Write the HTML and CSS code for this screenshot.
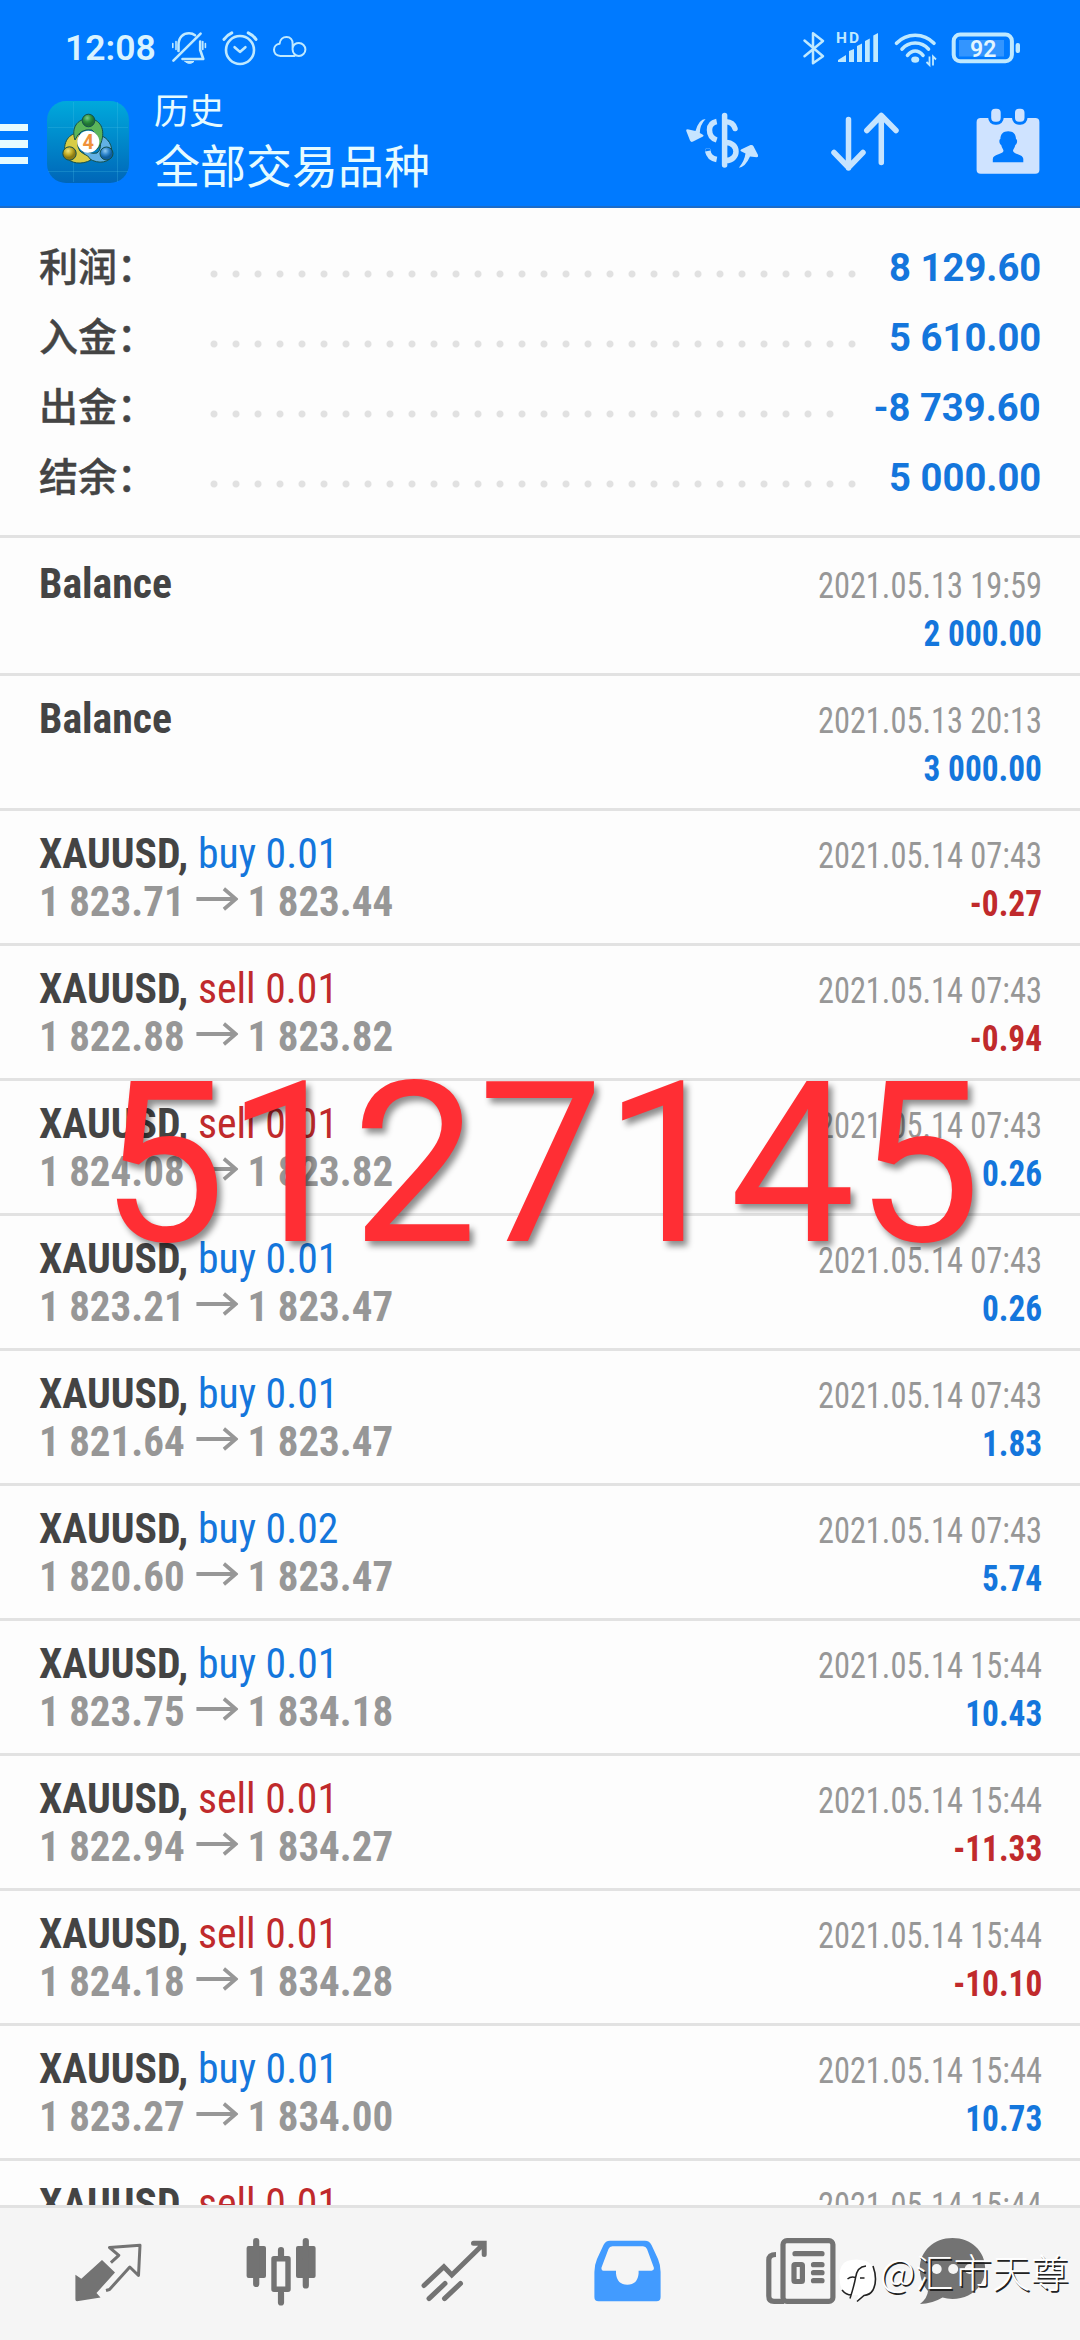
FILE: index.html
```html
<!DOCTYPE html>
<html lang="zh-CN">
<head>
<meta charset="utf-8">
<title>历史</title>
<link rel="stylesheet" href="styles.css">
</head>
<body>
<div class="screen">
  <header class="header">
    <div class="status">
      <span class="clock">12:08</span>
      <svg class="status-left" viewBox="168 28 144 40" width="144" height="40">
        <g fill="none" stroke="#bfe9ff" stroke-width="2.6" stroke-linecap="round" stroke-linejoin="round">
          <path d="M173.4 60.6L200.6 33.6M178.5 51V45C178.5 37 183.500 33.300 189 33.300C191.500 33.300 193.500 34 195 35.200M200.200 41.500V50L203.300 59H182.500"/>
          <path d="M172.800 43.500v4M176 41.500v8M202.800 41.500v8M205.400 43.500v4" stroke-width="1.600"/>
          <path d="M185 61.500h9q-4.500 4-9 0z" fill="#bfe9ff" stroke-width="1"/>
          <circle cx="240" cy="50" r="14"/>
          <path d="M224 39.400Q227 35 231.800 32.800M256 39.400Q253 35 248.200 32.800" stroke-width="3"/>
          <path d="M234.600 47.200L239.900 51.900L245.400 47.200"/>
          <path stroke-width="2" d="M294.500 55.900H280.500C276 55.900 274 53 274 49.800C274 46.500 276.500 44 279.600 43.700C280 39.500 283 37 286.500 37C290.500 37 292.600 40 292.600 43.500V49.600C292.600 53 295.200 55.900 298.900 55.900C302.500 55.900 305.400 53 305.400 49.500C305.400 46 302.500 43 298.900 43C296 43 293.500 45 292.800 47.500"/>
        </g>
      </svg>
      <svg class="status-right" viewBox="800 28 224 40" width="224" height="40">
        <path d="M804.500 40.500L823 56.300L813 63.200V33.200L823 41L804.500 56.300" fill="none" stroke="#bfe9ff" stroke-width="2.500" stroke-linejoin="round" stroke-linecap="round"/>
        <text class="hd" x="836" y="43" textLength="23">HD</text>
        <path fill="#bfe9ff" d="M838 62v-2l8-5v7zM849 62v-11l5-2v13zM857 62V46l5-2.500V62zM865 62V41l4.800-2.500V62zM873.300 62V35.500l4.700-2.500V62z"/>
        <g fill="none" stroke="#bfe9ff" stroke-width="3.600" stroke-linecap="round">
          <path d="M896.500 43.300Q904 35.200 915.200 35.200T934 43.300M902 49.200Q907 43 915.200 43T928.500 49.200M907.500 55.300Q911 51 915.200 51T923 55.300"/>
        </g>
        <ellipse cx="915.200" cy="59.600" rx="4" ry="3.200" fill="#bfe9ff"/>
        <path d="M929.500 56.500v8.500l-3-3M933 65.500v-9l3 3" fill="none" stroke="#bfe9ff" stroke-width="1.800"/>
        <rect x="959" y="40" width="45" height="16.500" fill="#3395ff"/>
        <rect x="953.700" y="34.500" width="58.200" height="26.800" rx="6.500" fill="none" stroke="#bfe9ff" stroke-width="4"/>
        <rect x="1015.600" y="43" width="4.400" height="10" rx="2" fill="#bfe9ff"/>
        <text class="battery" x="970" y="56.800">92</text>
      </svg>
    </div>
    <div class="toolbar">
      <span class="menu"><i></i><i></i><i></i></span>
      <svg class="logo" viewBox="47 101 82 82" width="82" height="82">
        <defs>
          <linearGradient id="tile" x1="0" y1="0" x2="0" y2="1"><stop offset="0" stop-color="#00a9dc"/><stop offset="1" stop-color="#0066b8"/></linearGradient>
          <radialGradient id="green" cx=".4" cy=".3"><stop offset="0" stop-color="#7cc98a"/><stop offset=".6" stop-color="#2f9440"/><stop offset="1" stop-color="#1f7134"/></radialGradient>
          <radialGradient id="gold" cx=".4" cy=".3"><stop offset="0" stop-color="#efe47c"/><stop offset=".6" stop-color="#c2ad28"/><stop offset="1" stop-color="#8b7a16"/></radialGradient>
          <radialGradient id="blue" cx=".4" cy=".3"><stop offset="0" stop-color="#8fcaf2"/><stop offset=".6" stop-color="#2f86cc"/><stop offset="1" stop-color="#0f5f9e"/></radialGradient>
        </defs>
        <rect x="47" y="101" width="82" height="82" rx="19" fill="url(#tile)"/>
        <path d="M48 127.500H128M48 171.500H128M73.500 102V182M117.500 102V182" stroke="#4cc4e8" stroke-opacity=".25" stroke-width="1"/>
        <g stroke="#15504c" stroke-width="1">
          <path d="M99 135C108 137 114 146 111 157C107 164 94 164 86 156C83 153 81 149 82 146Q88 155 97 153Q103 149 99 135z" fill="#62b1e4"/>
          <path d="M80 132.500C69 133 62 142 65.500 156C70 164 82 165 91 160Q88 155 84 154Q74 150 80 132.500z" fill="#d8cc45"/>
          <path d="M75 140C71 128 77 119 88.500 118.500C100 119 106 129 101 143Q99 149 95 150Q102 138 92 130Q80 128 75 140z" fill="#5bb55a"/>
          <circle cx="88.500" cy="120.500" r="6.300" fill="url(#green)"/>
          <circle cx="69.500" cy="153.500" r="6.700" fill="url(#gold)"/>
          <circle cx="106.500" cy="153.500" r="6.500" fill="url(#blue)"/>
        </g>
        <circle cx="88.300" cy="141.800" r="11" fill="#fff"/>
        <text class="four" x="88.300" y="149" text-anchor="middle">4</text>
      </svg>
      <div class="titles">
        <span class="title">历史</span>
        <span class="subtitle">全部交易品种</span>
      </div>
      <svg class="actions" viewBox="680 104 364 74" width="364" height="74">
        <g fill="none" stroke="#c6e4ff" stroke-width="5.500" stroke-linecap="round" stroke-linejoin="round">
          <path d="M724.600 115.400V165"/>
          <path d="M726 121.800Q733 122 735 128.500M726 142.500C732 142.500 736 146.500 736 151.500C736 156.500 732 160.500 726 160.500" />
          <path d="M716.700 121.500C711.500 122.500 709.500 126 709.500 130C709.500 135 712 138.500 716.700 140M707.800 151Q709 158 716.700 159.500" stroke-linecap="butt"/>
          <circle cx="707.900" cy="150.900" r=".1"/>
          <path d="M848.500 119.500V168M834 152.500L848.500 167.500L863 152.500M881.300 162.500V115.500M866.800 130.500L881.300 115.500L896 130.500"/>
        </g>
        <g fill="#c6e4ff">
          <path d="M705.600 119Q699 119 695.500 131L687.500 129.300Q685.500 129.300 686.300 131L690 140.500Q691 142.500 693 141.600L703 136.500Q704.500 135.300 702.500 134.500L699.800 133Q699.800 125 705.600 119z"/>
          <path d="M738.800 167.700Q745.400 167 750 156.500L756.700 157.300Q758.600 157.200 758 155L753.500 146.300Q752.600 144.600 750.500 145.100L741 149.500Q739.500 150.800 741.500 151.600L745.500 153.500Q744.500 161 738.800 167.700z"/>
          <rect x="976.600" y="118" width="62.800" height="55.700" rx="4" fill="#cfe3ff"/>
        </g>
        <g fill="#cfe3ff" stroke="#007aff" stroke-width="3"><rect x="989.700" y="107.200" width="12.500" height="16" rx="5.500"/><rect x="1013.500" y="107.200" width="12.500" height="16" rx="5.500"/></g>
        <path d="M1008.200 131.300C1013 131.300 1016 134 1016 139C1018 140 1017 144 1015.300 145C1014.800 148 1013 149.500 1013 151C1014 154.500 1023 154 1023.300 159V162.300H992.800V159C993 154 1002.500 154.500 1003.500 151C1003.500 149.500 1001.800 148 1001.200 145C999.500 144 998.500 140 1000.400 139C1000.400 134 1003.400 131.300 1008.200 131.300z" fill="#007aff"/>
      </svg>
    </div>
  </header>

  <section class="summary">
    <div class="sum"><span class="label">利润：</span><span class="dots"></span><b>8 129.60</b></div>
    <div class="sum"><span class="label">入金：</span><span class="dots"></span><b>5 610.00</b></div>
    <div class="sum"><span class="label">出金：</span><span class="dots"></span><b>-8 739.60</b></div>
    <div class="sum"><span class="label">结余：</span><span class="dots"></span><b>5 000.00</b></div>
  </section>

  <svg class="defs" width="0" height="0"><symbol id="to" viewBox="0 0 44 24"><path d="M0 12H41M29 1.800L41.500 12L29 22.200" fill="none" stroke="#979797" stroke-width="3.800"/></symbol></svg>

  <main class="list">
    <div class="row"><div class="line"><span class="sym">Balance</span><span class="date">2021.05.13 19:59</span></div><div class="line"><span></span><span class="val up">2 000.00</span></div></div>
    <div class="row"><div class="line"><span class="sym">Balance</span><span class="date">2021.05.13 20:13</span></div><div class="line"><span></span><span class="val up">3 000.00</span></div></div>
    <div class="row"><div class="line"><span class="sym">XAUUSD, <em class="up">buy 0.01</em></span><span class="date">2021.05.14 07:43</span></div><div class="line"><span class="price">1 823.71<svg><use href="#to"/></svg>1 823.44</span><span class="val down">-0.27</span></div></div>
    <div class="row"><div class="line"><span class="sym">XAUUSD, <em class="down">sell 0.01</em></span><span class="date">2021.05.14 07:43</span></div><div class="line"><span class="price">1 822.88<svg><use href="#to"/></svg>1 823.82</span><span class="val down">-0.94</span></div></div>
    <div class="row"><div class="line"><span class="sym">XAUUSD, <em class="down">sell 0.01</em></span><span class="date">2021.05.14 07:43</span></div><div class="line"><span class="price">1 824.08<svg><use href="#to"/></svg>1 823.82</span><span class="val up">0.26</span></div></div>
    <div class="row"><div class="line"><span class="sym">XAUUSD, <em class="up">buy 0.01</em></span><span class="date">2021.05.14 07:43</span></div><div class="line"><span class="price">1 823.21<svg><use href="#to"/></svg>1 823.47</span><span class="val up">0.26</span></div></div>
    <div class="row"><div class="line"><span class="sym">XAUUSD, <em class="up">buy 0.01</em></span><span class="date">2021.05.14 07:43</span></div><div class="line"><span class="price">1 821.64<svg><use href="#to"/></svg>1 823.47</span><span class="val up">1.83</span></div></div>
    <div class="row"><div class="line"><span class="sym">XAUUSD, <em class="up">buy 0.02</em></span><span class="date">2021.05.14 07:43</span></div><div class="line"><span class="price">1 820.60<svg><use href="#to"/></svg>1 823.47</span><span class="val up">5.74</span></div></div>
    <div class="row"><div class="line"><span class="sym">XAUUSD, <em class="up">buy 0.01</em></span><span class="date">2021.05.14 15:44</span></div><div class="line"><span class="price">1 823.75<svg><use href="#to"/></svg>1 834.18</span><span class="val up">10.43</span></div></div>
    <div class="row"><div class="line"><span class="sym">XAUUSD, <em class="down">sell 0.01</em></span><span class="date">2021.05.14 15:44</span></div><div class="line"><span class="price">1 822.94<svg><use href="#to"/></svg>1 834.27</span><span class="val down">-11.33</span></div></div>
    <div class="row"><div class="line"><span class="sym">XAUUSD, <em class="down">sell 0.01</em></span><span class="date">2021.05.14 15:44</span></div><div class="line"><span class="price">1 824.18<svg><use href="#to"/></svg>1 834.28</span><span class="val down">-10.10</span></div></div>
    <div class="row"><div class="line"><span class="sym">XAUUSD, <em class="up">buy 0.01</em></span><span class="date">2021.05.14 15:44</span></div><div class="line"><span class="price">1 823.27<svg><use href="#to"/></svg>1 834.00</span><span class="val up">10.73</span></div></div>
    <div class="row"><div class="line"><span class="sym">XAUUSD, <em class="down">sell 0.01</em></span><span class="date">2021.05.14 15:44</span></div></div>
  </main>

  <nav class="tabs">
    <svg viewBox="70 2236 76 72" width="76" height="72">
      <path d="M75.400 2274.700L81.300 2278.700L102 2260L115 2272.500L96.500 2293L100.500 2297.500L77 2301.200Q75.400 2301.200 75.400 2299.500z" fill="#737373"/>
      <path d="M110.900 2262.700L118.800 2255.300L109.500 2247.500L140 2245.300L138.500 2275.500L129.800 2267L109.500 2289.500L106 2290.500" fill="none" stroke="#737373" stroke-width="3" stroke-linejoin="round"/>
    </svg>
    <svg viewBox="243 2236 76 72" width="76" height="72">
      <g fill="#737373"><rect x="246.600" y="2246" width="19.400" height="32" rx="2"/><rect x="296" y="2246" width="19.600" height="32" rx="2"/></g>
      <g stroke="#737373" stroke-width="6.200" stroke-linecap="round" fill="none"><path d="M256.200 2241V2284M305.800 2241V2285.500M281 2250V2257M281 2293V2302.500"/></g>
      <rect x="274" y="2258.700" width="14" height="30.600" fill="none" stroke="#737373" stroke-width="5.400" stroke-linejoin="round"/>
    </svg>
    <svg viewBox="417 2236 76 72" width="76" height="72">
      <path d="M424 2285.500L443.900 2266.700L451.800 2275L484 2243.500M473.500 2243.300H484.200V2254.500M429 2298.600L445 2283.500M444.500 2298.600L460.500 2283.500" fill="none" stroke="#737373" stroke-width="5" stroke-linecap="round"/>
    </svg>
    <svg viewBox="590 2236 76 72" width="76" height="72">
      <path fill-rule="evenodd" fill="#429bff" d="M610 2240.700H645Q649.500 2240.700 651.500 2245L658 2259Q660.600 2265 660.600 2272V2297Q660.600 2301.300 656.500 2301.300H598.500Q594.400 2301.300 594.400 2297V2272Q594.400 2265 597 2259L603.500 2245Q605.500 2240.700 610 2240.700zM612.500 2246.300Q609.500 2246.300 608.500 2249L601.500 2267.500Q601 2270.700 603.500 2270.700H616V2273.500Q617 2284.700 627.300 2284.700T638.600 2273.500V2270.700H651.500Q654.500 2270.700 653.800 2267.500L647 2249Q645.800 2246.300 643 2246.300z"/>
    </svg>
    <svg viewBox="763 2236 76 72" width="76" height="72">
      <g fill="none" stroke="#737373" stroke-width="5.200">
        <rect x="783" y="2240.600" width="49.900" height="60.800" rx="4"/>
        <path d="M776 2254.500Q768.800 2254.500 768.800 2260V2296Q768.800 2301.400 774 2301.400H784"/>
        <rect x="794" y="2264.500" width="8.400" height="17" rx="1"/>
        <path d="M795 2253.700H822M813.500 2264.700H822M813.500 2272.700H822M813.500 2280.700H822" stroke-linecap="round"/>
      </g>
    </svg>
    <svg viewBox="915 2236 76 72" width="76" height="72">
      <path d="M952.500 2238C971 2238 985.200 2251 985.200 2268.500C985.200 2286 971 2299 952.500 2299Q947 2299 942.500 2297.600Q932 2304 920 2304Q927.500 2298 928 2291Q919.800 2282 919.800 2268.500C919.800 2251 934 2238 952.500 2238z" fill="#737373"/>
      <g fill="#f5f5f5"><circle cx="936.700" cy="2269" r="5"/><circle cx="953.200" cy="2269" r="5"/><circle cx="969.700" cy="2269" r="5"/></g>
    </svg>
  </nav>

  <div class="stamp">5127145</div>
  <div class="watermark">
    <svg viewBox="838 2258 42 46" width="42" height="46">
      <path d="M847 2262Q856 2259 866 2262Q874 2265 875 2278Q876 2293 865 2296L857 2302.500L858 2296L847 2296Q839 2291 839.500 2276Q840 2265 847 2262z" fill="#fff"/>
      <path d="M850 2299.500Q854 2287 855.500 2279Q857 2267.500 866 2267M847.500 2280Q851 2277 855.500 2278.500M860 2279h4.500M842 2291Q846 2296 851.500 2296" fill="none" stroke="#222" stroke-width="1.500"/>
      <path d="M873 2267Q878 2281 873 2291Q870 2296 864 2296.500L857 2302.500" fill="none" stroke="#222" stroke-width="1.600"/>
    </svg>
    <span>@汇市天尊</span>
  </div>
</div>
</body>
</html>
```
FILE: styles.css
```css
body { margin: 0; background: #fdfdfd; }
.screen {
  position: relative;
  width: 1080px;
  height: 2340px;
  overflow: hidden;
  display: flex;
  flex-direction: column;
  background: #fdfdfd;
  font-family: Roboto, "Noto Sans CJK SC", sans-serif;
  color: #444;
}
.header {
  box-sizing: border-box;
  height: 208px;
  flex: none;
  background: #007aff;
  border-bottom: 2px solid #1c6cc9;
}
.status { display: flex; align-items: center; height: 40px; padding: 28px 56px 0 65px; }
.clock { width: 103px; font-size: 35.500px; line-height: 40px; font-weight: 600; color: #d8f3ff; white-space: nowrap; }
.status-right { margin-left: auto; }
.hd { font: 700 15.500px Roboto, sans-serif; fill: #bfe9ff; }
.battery { font: 600 23px Roboto, sans-serif; fill: #e4f6ff; }
.toolbar { display: flex; align-items: flex-start; height: 138px; }
.menu { width: 27.500px; margin: 56px 19.500px 0 0; display: flex; flex-direction: column; gap: 9px; }
.menu i { height: 7.300px; background: #e6fbff; }
.logo { margin-top: 33px; flex: none; }
.four { font: 700 20px Roboto, sans-serif; fill: #f0913a; }
.titles { display: flex; flex-direction: column; margin: 24px 0 0 25px; color: #e6fbff; }
.title { font-size: 35px; line-height: 42px; }
.subtitle { font-size: 46px; line-height: 66px; }
.actions { margin: 36px 36px 0 auto; }

.summary { flex: none; box-sizing: border-box; height: 330px; padding: 24px 39px 0; border-bottom: 3px solid #e2e2e2; }
.sum { display: flex; align-items: center; height: 70px; font-size: 39px; line-height: 70px; }
.label { width: 163.500px; margin-top: -6px; font-family: "Noto Sans CJK SC", sans-serif; font-weight: 500; -webkit-text-stroke: .4px #444; white-space: nowrap; }
.dots {
  flex: 1;
  height: 8px;
  margin: 14px 24px 0 0;
  background: radial-gradient(circle at 11px 4px, #e1e1e1 3px, transparent 4px) 0 0 / 22px 8px round no-repeat;
  background-repeat: repeat-x;
}
.sum b { margin-top: 2px; color: #1476dc; font-weight: 700; transform: scaleX(.98); transform-origin: right; }

.defs { position: absolute; }
.list { flex: 1; min-height: 0; overflow: hidden; padding-top: 3px; font-stretch: 75%; }
.row { box-sizing: border-box; height: 135px; padding: 18px 38px 0 39px; border-bottom: 3px solid #e2e2e2; }
.line { display: flex; align-items: baseline; height: 48px; line-height: 48px; white-space: nowrap; }
.line::before { content: "\200b"; font-size: 43px; }
.line > :last-child { margin-left: auto; }
.sym, .price, .date, .val { font-family: "Roboto Condensed", Roboto, sans-serif; }
.sym { font-size: 43px; font-weight: 700; transform: scaleX(.97); transform-origin: left; }
.sym em { font-style: normal; font-weight: 400; }
.price { font-size: 43px; font-weight: 700; color: #979797; transform: scaleX(.953); transform-origin: left; }
.price svg { width: 44px; height: 24px; margin: 0 10px 0 12px; vertical-align: 5px; }
.line > .date { font-size: 36px; color: #979797; margin-left: auto; transform: scaleX(.9); transform-origin: right; }
.val { font-size: 36px; font-weight: 700; transform: scaleX(.925); transform-origin: right; }
.up { color: #1476dc; }
.down { color: #c02a2c; }

.tabs {
  flex: none;
  box-sizing: border-box;
  height: 135px;
  display: flex;
  gap: 97.300px;
  padding: 28px 0 0 70px;
  background: #f5f5f5;
  border-top: 3px solid #e2e2e2;
}
.tabs svg { flex: none; }
.tabs svg:last-child { margin-left: -21px; }

.stamp {
  position: absolute;
  left: 100px;
  top: 1033px;
  font-size: 224px;
  line-height: 264px;
  color: #ff2e34;
  text-shadow: 4px 5px 6px rgba(0, 0, 0, .45);
}
.watermark {
  position: absolute;
  left: 838px;
  top: 2251px;
  height: 46px;
  display: flex;
  align-items: center;
  gap: 0;
  font: 300 38.500px/46px "Noto Sans CJK SC", sans-serif;
  color: #fff;
  text-shadow: 1.500px 1.500px 0 #222;
  white-space: nowrap;
}
.watermark svg { margin-top: 12px; }
.watermark span { margin-top: -8px; }
```
